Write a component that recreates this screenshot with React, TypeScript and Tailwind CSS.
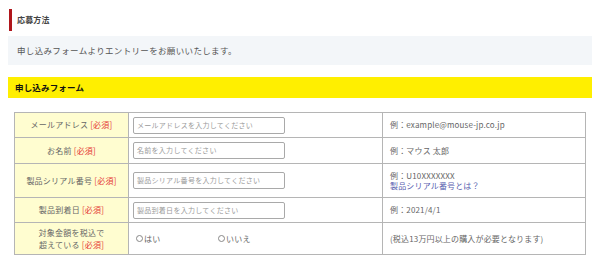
import React from "react";

const font = { fontFamily: '"Noto Sans CJK JP", "Noto Sans", sans-serif' };

function Req() {
  return <span className="text-[#e53935]">[必須]</span>;
}

function Input({ ph }: { ph: string }) {
  return (
    <div className="w-[152px] h-[17px] border border-[#a9a9a9] rounded-[2px] bg-white flex items-center px-[3px] text-[7px] text-[#9a9a9a] tracking-[0.04em]">
      {ph}
    </div>
  );
}

export default function App() {
  const td1 = "bg-[#fffdd0] border border-[#b5b5b5] text-center text-[8px] text-[#666] tracking-[0.03em] leading-[12px]";
  const td2 = "border border-[#b5b5b5] pl-[4px]";
  const td3 = "border border-[#b5b5b5] pl-[7px] text-[8px] text-[#666] tracking-[0.02em] leading-[10px]";
  return (
    <div className="w-[600px] h-[263px] bg-white" style={font}>
      <div className="pt-[9px] pl-[8px] w-[592px]">
        <div className="ml-[1px] h-[22px] border-l-[3px] border-[#b0161c] flex items-center pl-[5px] text-[8px] font-semibold text-[#444] tracking-[0.02em]">
          応募方法
        </div>
        <div className="mt-[5px] h-[29px] bg-[#f3f6f9] flex items-center pl-[9px] text-[8.5px] text-[#555] tracking-[0.04em]">
          申し込みフォームよりエントリーをお願いいたします。
        </div>
        <div className="mt-[12px] h-[21px] bg-[#ffef00] flex items-center pl-[7px] text-[8.5px] font-bold text-[#111] tracking-[0.02em]">
          申し込みフォーム
        </div>
        <table className="mt-[14px] ml-[6px] border-collapse table-fixed w-[571px]">
          <colgroup>
            <col className="w-[114px]" />
            <col className="w-[254px]" />
            <col className="w-[203px]" />
          </colgroup>
          <tbody>
            <tr className="h-[25px]">
              <td className={td1}>メールアドレス <Req /></td>
              <td className={td2}><Input ph="メールアドレスを入力してください" /></td>
              <td className={td3}>例：example@mouse-jp.co.jp</td>
            </tr>
            <tr className="h-[26px]">
              <td className={td1}>お名前 <Req /></td>
              <td className={td2}><Input ph="名前を入力してください" /></td>
              <td className={td3}>例：マウス 太郎</td>
            </tr>
            <tr className="h-[34px]">
              <td className={td1}>製品シリアル番号 <Req /></td>
              <td className={td2}><Input ph="製品シリアル番号を入力してください" /></td>
              <td className={td3}>
                例：U10XXXXXXX
                <br />
                <span className="text-[#5a5fb0]">製品シリアル番号とは？</span>
              </td>
            </tr>
            <tr className="h-[25px]">
              <td className={td1}>製品到着日 <Req /></td>
              <td className={td2}><Input ph="製品到着日を入力してください" /></td>
              <td className={td3}>例：2021/4/1</td>
            </tr>
            <tr className="h-[32px]">
              <td className={td1}>
                対象金額を税込で
                <br />
                超えている <Req />
              </td>
              <td className={td2}>
                <div className="flex items-center text-[8px] text-[#666] tracking-[0.03em]">
                  <div className="w-[85px] pl-[3px] flex items-center">
                    <span className="inline-block w-[7px] h-[7px] rounded-full border border-[#888] mr-[1px]" />
                    はい
                  </div>
                  <div className="flex items-center">
                    <span className="inline-block w-[7px] h-[7px] rounded-full border border-[#888] mr-[1px]" />
                    いいえ
                  </div>
                </div>
              </td>
              <td className={td3}>(税込13万円以上の購入が必要となります)</td>
            </tr>
          </tbody>
        </table>
      </div>
    </div>
  );
}
